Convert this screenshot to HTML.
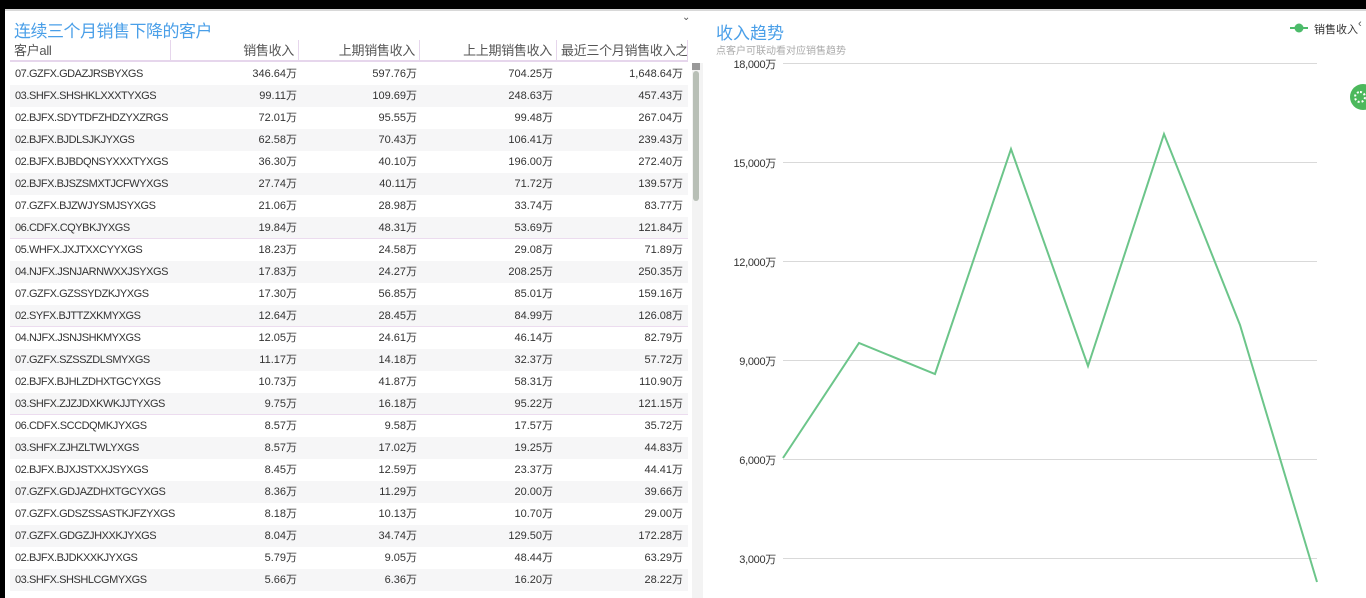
<!DOCTYPE html>
<html><head><meta charset="utf-8"><style>
*{margin:0;padding:0;box-sizing:border-box}
body{width:1366px;height:598px;overflow:hidden;background:#fff;font-family:"Liberation Sans","Noto Sans CJK SC",sans-serif;position:relative}
.topbar{position:absolute;left:0;top:0;width:1366px;height:9px;background:#000}
.topline{position:absolute;left:5px;top:9px;width:1361px;height:2px;background:#d8d8d8}
.lstrip{position:absolute;left:0;top:0;width:5px;height:598px;background:#000}
.title{position:absolute;left:14px;top:17px;font-size:17px;color:#4a9fe8;letter-spacing:-0.5px}
.hdr{position:absolute;left:10px;top:40px;width:678px;height:22px;border-bottom:2px solid #e6d6ec;font-size:13px;color:#555;letter-spacing:-0.3px}
.hdr div{position:absolute;top:0;height:21px;line-height:21px;border-right:1px solid #e6d6ec;padding:0 4px;white-space:nowrap;overflow:hidden}
.rows{position:absolute;left:10px;top:63px;width:678px}
.r{height:22px;position:relative;font-size:11px;color:#333}
.r:nth-child(even){background:#f6f6f7}
.r.b{border-bottom:1px solid #ecdcef}
.r span{position:absolute;top:0;line-height:22px}
.c0{left:5px;letter-spacing:-0.45px}.c1{right:391px}.c2{right:271px}.c3{right:135px}.c4{right:5px}
.sb{position:absolute;left:692px;top:63px;width:8px;height:535px;background:#f3f3f3}
.sb i{position:absolute;left:1px;top:8px;width:6px;height:130px;background:#b8bfb6;border-radius:3px}
.sb b{position:absolute;left:0;top:0;width:8px;height:7px;background:#999}
.gap{position:absolute;left:700px;top:63px;width:3px;height:535px;background:#f3f3f3}
.rt{position:absolute;left:716px;top:19px;font-size:17px;color:#4a9fe8}
.sub{position:absolute;left:716px;top:42px;font-size:10px;color:#aaa}
.ylab{position:absolute;width:70px;text-align:right;left:706px;font-size:11px;color:#333;letter-spacing:-0.3px}
.leg{position:absolute;left:1314px;top:21px;font-size:11px;color:#333}
</style></head><body>
<div class="topbar"></div><div class="topline"></div><div class="lstrip"></div>
<div class="title">连续三个月销售下降的客户</div>
<div style="position:absolute;left:682px;top:12px;font-size:10px;color:#555">⌄</div>
<div class="hdr">
<div style="left:0;width:161px">客户all</div>
<div style="left:161px;width:128px;text-align:right">销售收入</div>
<div style="left:289px;width:121px;text-align:right">上期销售收入</div>
<div style="left:410px;width:137px;text-align:right">上上期销售收入</div>
<div style="left:547px;width:131px">最近三个月销售收入之和</div>
</div>
<div class="rows">
<div class="r"><span class="c0">07.GZFX.GDAZJRSBYXGS</span><span class="c1">346.64万</span><span class="c2">597.76万</span><span class="c3">704.25万</span><span class="c4">1,648.64万</span></div>
<div class="r"><span class="c0">03.SHFX.SHSHKLXXXTYXGS</span><span class="c1">99.11万</span><span class="c2">109.69万</span><span class="c3">248.63万</span><span class="c4">457.43万</span></div>
<div class="r"><span class="c0">02.BJFX.SDYTDFZHDZYXZRGS</span><span class="c1">72.01万</span><span class="c2">95.55万</span><span class="c3">99.48万</span><span class="c4">267.04万</span></div>
<div class="r"><span class="c0">02.BJFX.BJDLSJKJYXGS</span><span class="c1">62.58万</span><span class="c2">70.43万</span><span class="c3">106.41万</span><span class="c4">239.43万</span></div>
<div class="r"><span class="c0">02.BJFX.BJBDQNSYXXXTYXGS</span><span class="c1">36.30万</span><span class="c2">40.10万</span><span class="c3">196.00万</span><span class="c4">272.40万</span></div>
<div class="r"><span class="c0">02.BJFX.BJSZSMXTJCFWYXGS</span><span class="c1">27.74万</span><span class="c2">40.11万</span><span class="c3">71.72万</span><span class="c4">139.57万</span></div>
<div class="r"><span class="c0">07.GZFX.BJZWJYSMJSYXGS</span><span class="c1">21.06万</span><span class="c2">28.98万</span><span class="c3">33.74万</span><span class="c4">83.77万</span></div>
<div class="r b"><span class="c0">06.CDFX.CQYBKJYXGS</span><span class="c1">19.84万</span><span class="c2">48.31万</span><span class="c3">53.69万</span><span class="c4">121.84万</span></div>
<div class="r"><span class="c0">05.WHFX.JXJTXXCYYXGS</span><span class="c1">18.23万</span><span class="c2">24.58万</span><span class="c3">29.08万</span><span class="c4">71.89万</span></div>
<div class="r"><span class="c0">04.NJFX.JSNJARNWXXJSYXGS</span><span class="c1">17.83万</span><span class="c2">24.27万</span><span class="c3">208.25万</span><span class="c4">250.35万</span></div>
<div class="r"><span class="c0">07.GZFX.GZSSYDZKJYXGS</span><span class="c1">17.30万</span><span class="c2">56.85万</span><span class="c3">85.01万</span><span class="c4">159.16万</span></div>
<div class="r b"><span class="c0">02.SYFX.BJTTZXKMYXGS</span><span class="c1">12.64万</span><span class="c2">28.45万</span><span class="c3">84.99万</span><span class="c4">126.08万</span></div>
<div class="r"><span class="c0">04.NJFX.JSNJSHKMYXGS</span><span class="c1">12.05万</span><span class="c2">24.61万</span><span class="c3">46.14万</span><span class="c4">82.79万</span></div>
<div class="r"><span class="c0">07.GZFX.SZSSZDLSMYXGS</span><span class="c1">11.17万</span><span class="c2">14.18万</span><span class="c3">32.37万</span><span class="c4">57.72万</span></div>
<div class="r"><span class="c0">02.BJFX.BJHLZDHXTGCYXGS</span><span class="c1">10.73万</span><span class="c2">41.87万</span><span class="c3">58.31万</span><span class="c4">110.90万</span></div>
<div class="r b"><span class="c0">03.SHFX.ZJZJDXKWKJJTYXGS</span><span class="c1">9.75万</span><span class="c2">16.18万</span><span class="c3">95.22万</span><span class="c4">121.15万</span></div>
<div class="r"><span class="c0">06.CDFX.SCCDQMKJYXGS</span><span class="c1">8.57万</span><span class="c2">9.58万</span><span class="c3">17.57万</span><span class="c4">35.72万</span></div>
<div class="r"><span class="c0">03.SHFX.ZJHZLTWLYXGS</span><span class="c1">8.57万</span><span class="c2">17.02万</span><span class="c3">19.25万</span><span class="c4">44.83万</span></div>
<div class="r"><span class="c0">02.BJFX.BJXJSTXXJSYXGS</span><span class="c1">8.45万</span><span class="c2">12.59万</span><span class="c3">23.37万</span><span class="c4">44.41万</span></div>
<div class="r"><span class="c0">07.GZFX.GDJAZDHXTGCYXGS</span><span class="c1">8.36万</span><span class="c2">11.29万</span><span class="c3">20.00万</span><span class="c4">39.66万</span></div>
<div class="r"><span class="c0">07.GZFX.GDSZSSASTKJFZYXGS</span><span class="c1">8.18万</span><span class="c2">10.13万</span><span class="c3">10.70万</span><span class="c4">29.00万</span></div>
<div class="r"><span class="c0">07.GZFX.GDGZJHXXKJYXGS</span><span class="c1">8.04万</span><span class="c2">34.74万</span><span class="c3">129.50万</span><span class="c4">172.28万</span></div>
<div class="r"><span class="c0">02.BJFX.BJDKXXKJYXGS</span><span class="c1">5.79万</span><span class="c2">9.05万</span><span class="c3">48.44万</span><span class="c4">63.29万</span></div>
<div class="r"><span class="c0">03.SHFX.SHSHLCGMYXGS</span><span class="c1">5.66万</span><span class="c2">6.36万</span><span class="c3">16.20万</span><span class="c4">28.22万</span></div>
</div>
<div class="sb"><b></b><i></i></div><div class="gap"></div>
<div class="rt">收入趋势</div>
<div class="sub">点客户可联动看对应销售趋势</div>
<div class="leg"><svg width="18" height="10" style="position:absolute;left:-24px;top:2px"><line x1="0" y1="5" x2="18" y2="5" stroke="#4cbb6a" stroke-width="2"/><circle cx="9" cy="5" r="4.5" fill="#4cbb6a"/></svg>销售收入</div>
<div style="position:absolute;left:1358px;top:18px;font-size:11px;color:#555">‹</div>
<div style="position:absolute;left:1350px;top:84px;width:26px;height:26px;border-radius:50%;background:#4cb85c"><div style="position:absolute;left:4px;top:7px;width:12px;height:12px;border-radius:50%;border:2px dotted #fff"></div></div>
<div class="ylab" style="top:56px">18,000万</div>
<div class="ylab" style="top:155px">15,000万</div>
<div class="ylab" style="top:254px">12,000万</div>
<div class="ylab" style="top:353px">9,000万</div>
<div class="ylab" style="top:452px">6,000万</div>
<div class="ylab" style="top:551px">3,000万</div>
<svg width="1366" height="598" style="position:absolute;left:0;top:0">
<g stroke="#d9d9d9" stroke-width="1">
<line x1="783" y1="63.5" x2="1317" y2="63.5"/><line x1="783" y1="162.5" x2="1317" y2="162.5"/><line x1="783" y1="261.5" x2="1317" y2="261.5"/><line x1="783" y1="360.5" x2="1317" y2="360.5"/><line x1="783" y1="459.5" x2="1317" y2="459.5"/><line x1="783" y1="558.5" x2="1317" y2="558.5"/>
</g>
<polyline fill="none" stroke="#6cc58a" stroke-width="2" points="783,458 859,343 935,374 1011,149 1088,366 1164,134 1240,325 1317,582"/>
</svg>
</body></html>
